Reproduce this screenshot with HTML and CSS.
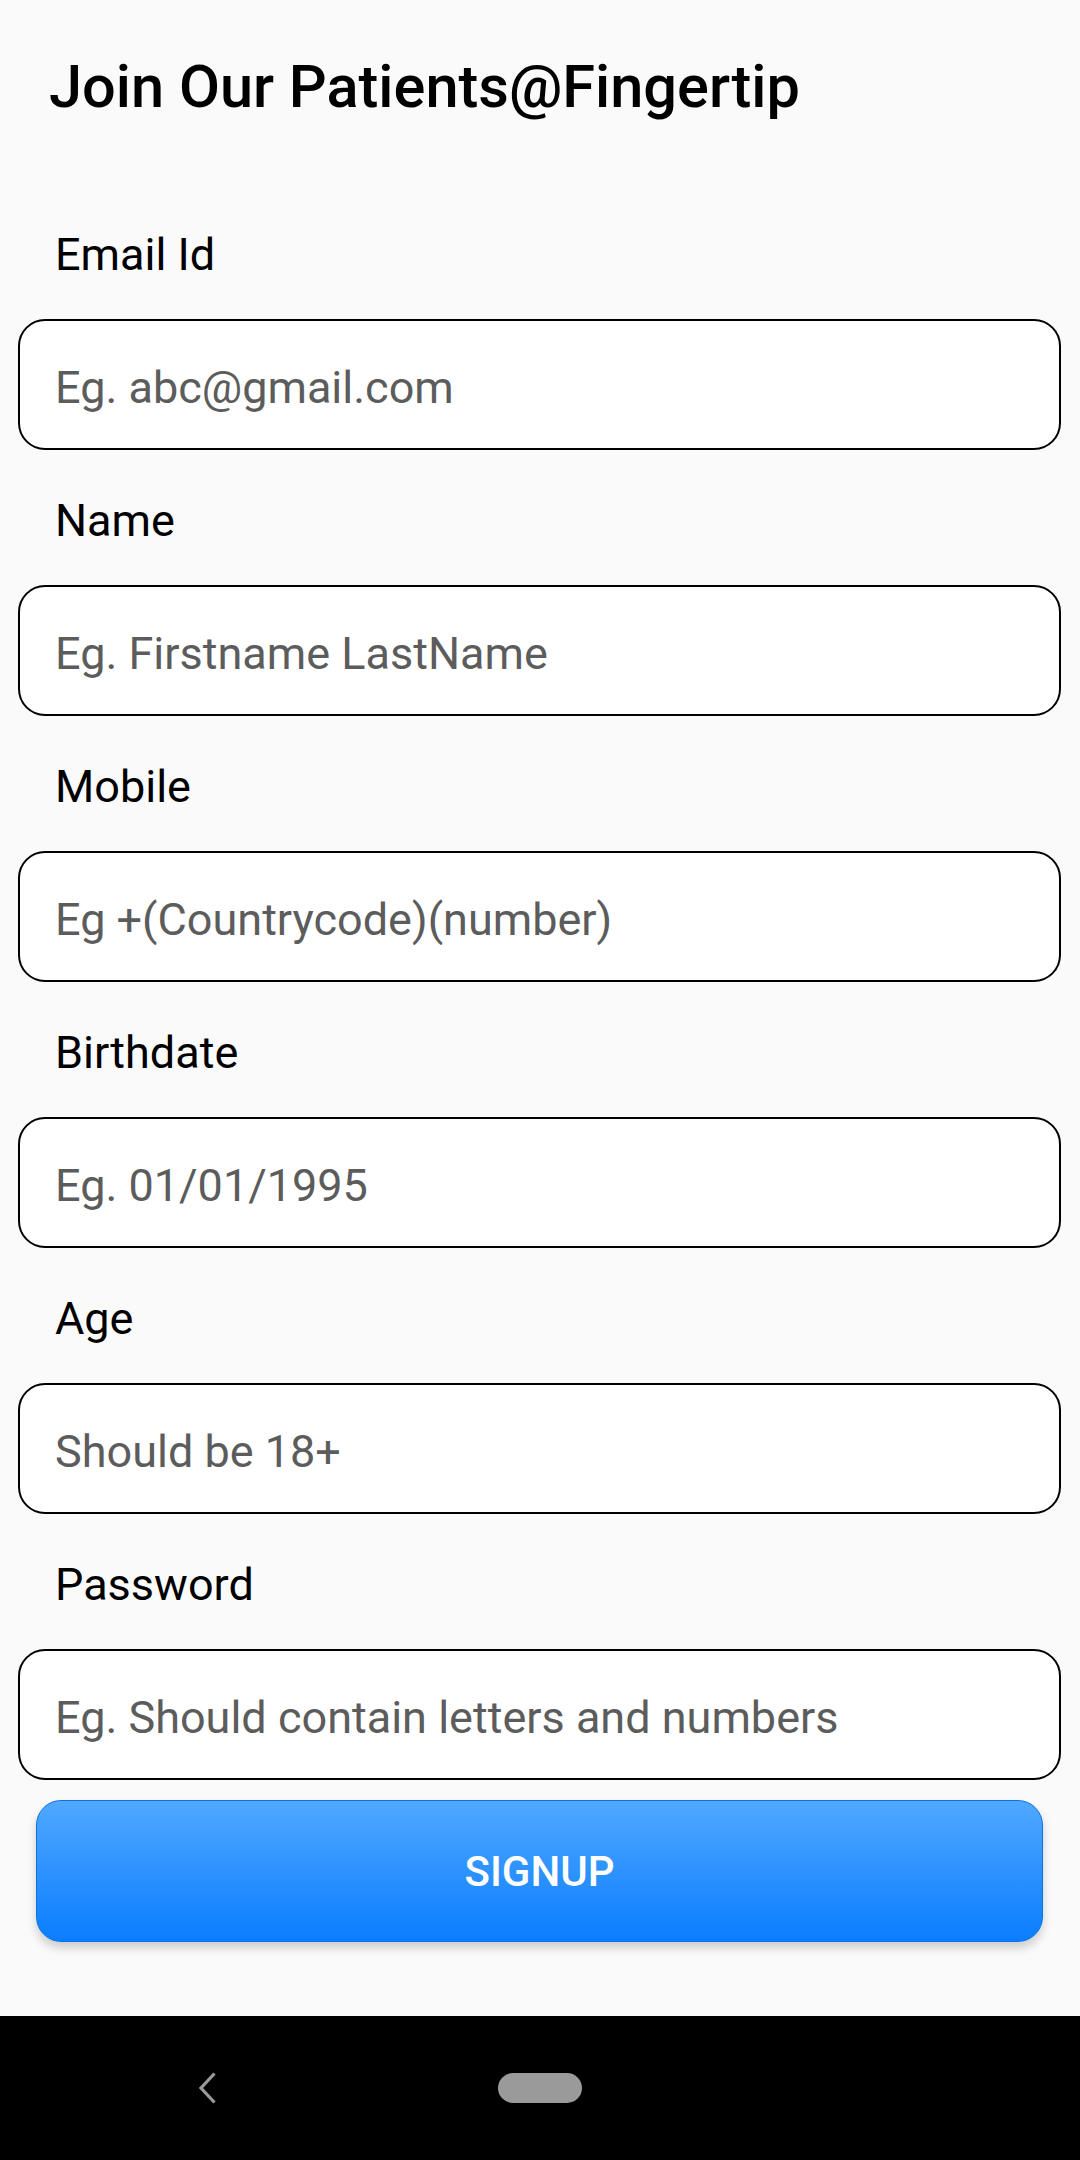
FILE: index.html
```html
<!DOCTYPE html>
<html lang="en">
<head>
<meta charset="utf-8">
<title>Join Our Patients@Fingertip</title>
<link rel="stylesheet" href="styles.css">
</head>
<body>
<div class="screen">
  <main class="content">
    <h1 class="title">Join Our Patients@Fingertip</h1>
    <form class="form">
      <div class="field">
        <label class="label">Email Id</label>
        <div class="box"><span class="ph">Eg. abc@gmail.com</span></div>
      </div>
      <div class="field">
        <label class="label">Name</label>
        <div class="box"><span class="ph">Eg. Firstname LastName</span></div>
      </div>
      <div class="field">
        <label class="label">Mobile</label>
        <div class="box"><span class="ph">Eg +(Countrycode)(number)</span></div>
      </div>
      <div class="field">
        <label class="label">Birthdate</label>
        <div class="box"><span class="ph">Eg. 01/01/1995</span></div>
      </div>
      <div class="field">
        <label class="label">Age</label>
        <div class="box"><span class="ph">Should be 18+</span></div>
      </div>
      <div class="field">
        <label class="label">Password</label>
        <div class="box"><span class="ph">Eg. Should contain letters and numbers</span></div>
      </div>
      <div class="btn">SIGNUP</div>
    </form>
  </main>
  <nav class="navbar">
    <div class="nav-left">
      <svg class="back" width="18" height="32" viewBox="0 0 18 32"><path d="M16.5 1.5 L3 16 L16.5 30.5" fill="none" stroke="#9a9a9a" stroke-width="3.2"/></svg>
    </div>
    <div class="home"></div>
    <div class="nav-right"></div>
  </nav>
</div>
</body>
</html>
```
FILE: styles.css
```css
html, body {
  margin: 0;
  padding: 0;
}
body {
  background: #fafafa;
  font-family: Roboto, "Liberation Sans", sans-serif;
  color: #000;
}
.screen {
  width: 1080px;
  height: 2160px;
  display: flex;
  flex-direction: column;
}
.content {
  flex: 1;
  display: flex;
  flex-direction: column;
}
.title {
  margin: 52px 0 0 49px;
  font-size: 59.5px;
  line-height: 70px;
  font-weight: 500;
}
.form {
  margin: 62px 0 0 0;
  display: flex;
  flex-direction: column;
}
.field {
  display: flex;
  flex-direction: column;
  padding-top: 44px;
}
.label {
  font-size: 45px;
  line-height: 54px;
  margin: 0 0 37px 55px;
}
.box {
  margin: 0 19px 0 18px;
  height: 131px;
  box-sizing: border-box;
  border: 2px solid #000;
  border-radius: 27px;
  background: #fff;
  display: flex;
  align-items: center;
  padding: 5px 0 0 35px;
}
.ph {
  font-size: 45px;
  color: #5c5c5c;
}
.btn {
  margin: 20px 37px 0 36px;
  height: 142px;
  box-sizing: border-box;
  border: 1.5px solid #0a74e4;
  border-radius: 25px;
  background: linear-gradient(to bottom, #50a8ff, #0a7dff);
  box-shadow: 0 6px 10px rgba(0, 0, 0, 0.18);
  display: flex;
  align-items: center;
  justify-content: center;
  color: #fff;
  font-size: 42px;
  font-weight: 500;
}
.navbar {
  height: 144px;
  background: #000;
  display: grid;
  grid-template-columns: 1fr auto 1fr;
  align-items: center;
}
.nav-left {
  padding-left: 198px;
}
.back {
  display: block;
}
.home {
  width: 84px;
  height: 30px;
  border-radius: 15px;
  background: #9a9a9a;
}
```
